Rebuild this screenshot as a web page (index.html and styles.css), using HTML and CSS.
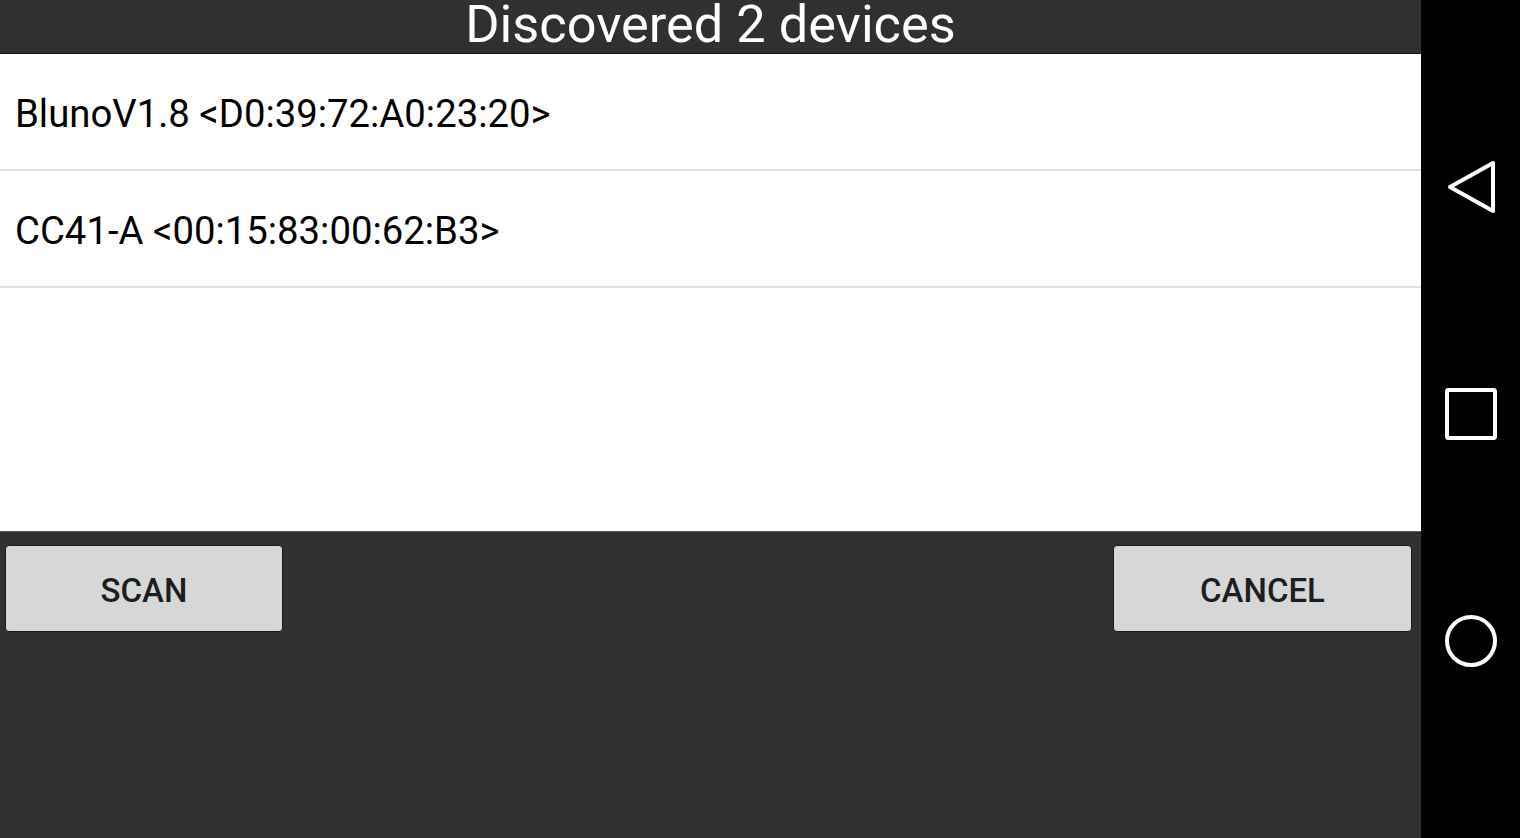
FILE: index.html
```html
<!DOCTYPE html>
<html>
<head>
<meta charset="utf-8">
<link rel="stylesheet" href="styles.css">
</head>
<body>
<div class="screen">
  <div class="app">
    <div class="title">Discovered 2 devices</div>
    <div class="list">
      <div class="row">BlunoV1.8 &lt;D0:39:72:A0:23:20&gt;</div>
      <div class="row">CC41-A &lt;00:15:83:00:62:B3&gt;</div>
    </div>
    <div class="buttons">
      <button class="btn scan">SCAN</button>
      <button class="btn cancel">CANCEL</button>
    </div>
  </div>
  <div class="nav">
    <svg class="navicon" width="52" height="54" viewBox="0 0 52 54"><path d="M48 3 L48 51 L5 27 Z" fill="none" stroke="#fff" stroke-width="4" stroke-linejoin="round"/></svg>
    <svg class="navicon" width="54" height="54" viewBox="0 0 54 54"><rect x="3" y="3" width="48" height="48" rx="1.5" fill="none" stroke="#fff" stroke-width="4"/></svg>
    <svg class="navicon" width="54" height="54" viewBox="0 0 54 54"><circle cx="27" cy="27" r="24" fill="none" stroke="#fff" stroke-width="4"/></svg>
  </div>
</div>
</body>
</html>
```
FILE: styles.css
```css
html, body {
  margin: 0;
  padding: 0;
}
body {
  font-family: Roboto, "Liberation Sans", sans-serif;
  background: #000;
}
.screen {
  display: flex;
  width: 1520px;
  height: 838px;
  overflow: hidden;
}
.app {
  width: 1421px;
  height: 838px;
  background: #303030;
  display: flex;
  flex-direction: column;
}
.title {
  height: 53px;
  border-bottom: 1px solid #111;
  color: #fff;
  font-size: 52.3px;
  line-height: 48px;
  text-align: center;
  overflow: hidden;
}
.list {
  height: 477px;
  background: #fff;
  border-bottom: 1px solid #5a5a5a;
}
.row {
  height: 115px;
  border-bottom: 2px solid #e2e2e2;
  padding-left: 15px;
  font-size: 38.3px;
  line-height: 120px;
  color: #000;
}
.buttons {
  display: flex;
  justify-content: space-between;
  padding: 13px 9px 0 5px;
}
.btn {
  height: 87px;
  background: #d6d7d7;
  border: 1px solid #1a1a1a;
  border-radius: 4px;
  font-family: Roboto, "Liberation Sans", sans-serif;
  font-weight: 500;
  font-size: 33px;
  color: #1e1e1e;
  padding: 3px 0 0 0;
}
.scan {
  width: 278px;
}
.cancel {
  width: 299px;
}
.nav {
  width: 99px;
  height: 838px;
  background: #000;
  display: flex;
  flex-direction: column;
  align-items: center;
  padding-top: 160px;
  box-sizing: border-box;
  gap: 173px;
}
.navicon {
  display: block;
}
```
